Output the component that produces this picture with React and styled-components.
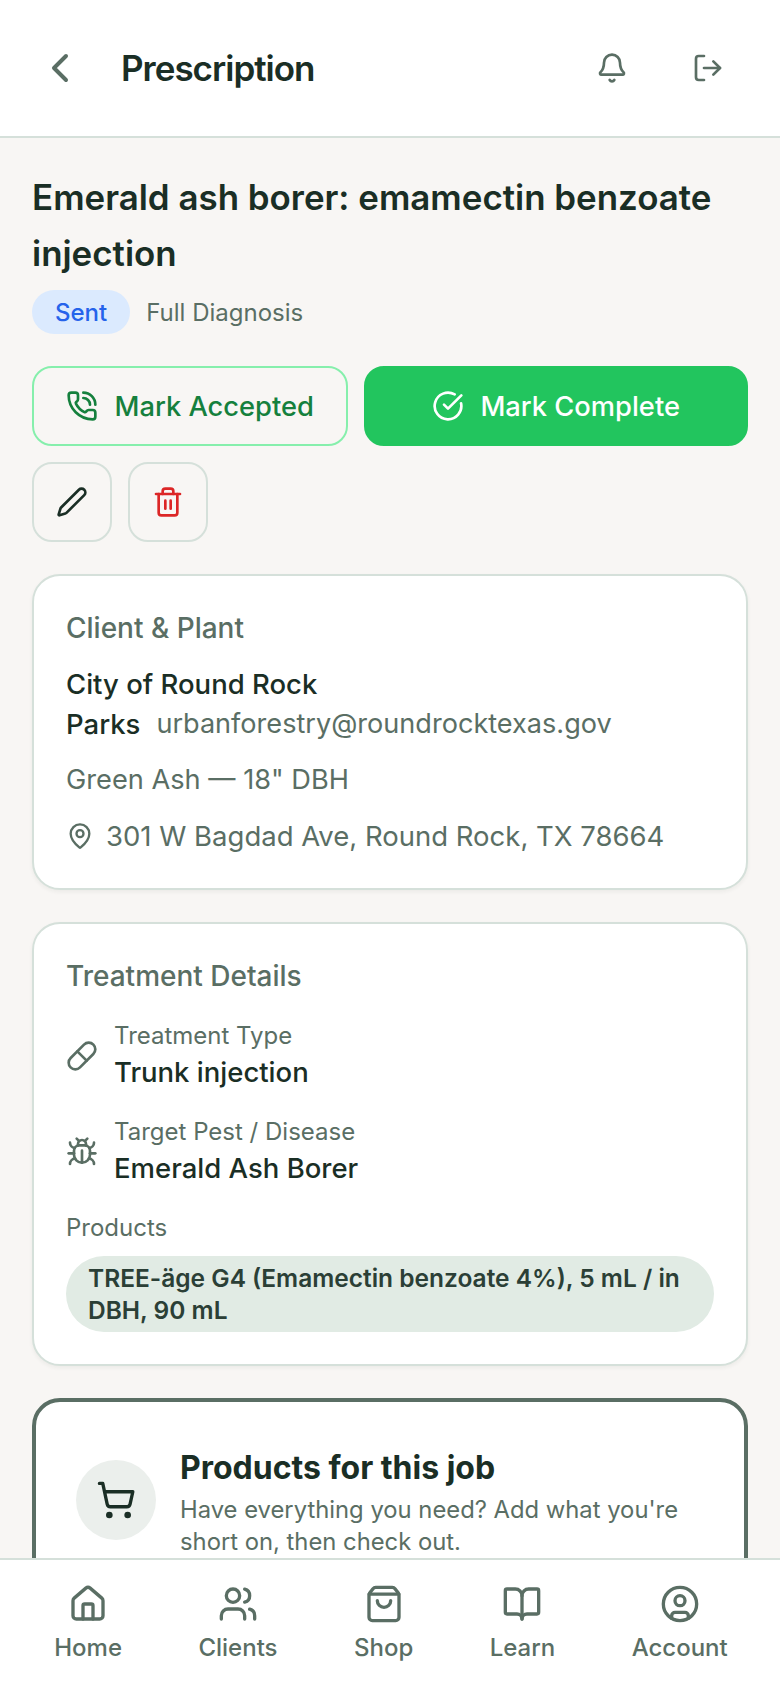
import React from 'react';
import styled, { createGlobalStyle } from 'styled-components';
import {
  ChevronLeft, Bell, LogOut, PhoneCall, CircleCheckBig, Pen, Trash2, MapPin,
  Pill, Bug, ShoppingCart, Home, Users, ShoppingBag, BookOpen, CircleUser,
} from 'lucide-react';

const ink = '#1a2e25';
const muted = '#5a6e64';
const line = '#d5e0da';

const GlobalStyle = createGlobalStyle`
  html, body { margin: 0; padding: 0; height: 100%; }
  body { font-family: Inter, "Liberation Sans", sans-serif; background: #f8f6f4; color: ${ink}; }
`;

const Screen = styled.div`
  width: 780px;
  height: 1688px;
  display: flex;
  flex-direction: column;
  overflow: hidden;
`;

const Header = styled.header`
  flex: none;
  height: 136px;
  display: flex;
  align-items: center;
  padding: 0 56px 0 36px;
  background: #fff;
  border-bottom: 2px solid ${line};
`;

const HeaderTitle = styled.h1`
  flex: 1;
  margin: 0 0 0 37px;
  font-size: 35px;
  font-weight: 600;
  letter-spacing: -1px;
  color: ${ink};
`;

const HeaderIcons = styled.div`
  display: flex;
  gap: 64px;
  color: ${muted};
`;

const Content = styled.main`
  flex: 1;
  min-height: 0;
  overflow: hidden;
  padding: 31px 32px 0;
  display: flex;
  flex-direction: column;
`;

const Title = styled.h2`
  margin: 0;
  font-size: 34.9px;
  line-height: 56px;
  font-weight: 600;
  color: ${ink};
`;

const MetaRow = styled.div`
  display: flex;
  align-items: center;
  gap: 16px;
  margin-top: 9px;
`;

const Badge = styled.span`
  padding: 0 23px;
  height: 44px;
  display: flex;
  align-items: center;
  border-radius: 22px;
  background: #dbeafe;
  color: #2563eb;
  font-size: 24px;
  font-weight: 500;
`;

const MetaText = styled.span`
  font-size: 24px;
  color: ${muted};
`;

const ActionRow = styled.div`
  display: flex;
  gap: 16px;
  margin-top: 32px;
`;

const ActionButton = styled.button`
  height: 80px;
  flex: ${p => p.$grow} 1 0;
  display: flex;
  align-items: center;
  justify-content: center;
  gap: 16px;
  padding: 0;
  border-radius: 20px;
  font-family: inherit;
  font-size: 27.3px;
  font-weight: 500;
  background: ${p => (p.$primary ? '#22c55e' : 'transparent')};
  color: ${p => (p.$primary ? '#fff' : '#15803d')};
  border: 2px solid ${p => (p.$primary ? '#22c55e' : '#86efac')};
`;

const IconRow = styled.div`
  display: flex;
  gap: 16px;
  margin-top: 16px;
`;

const IconButton = styled.button`
  width: 80px;
  height: 80px;
  display: flex;
  align-items: center;
  justify-content: center;
  padding: 0;
  border-radius: 20px;
  background: transparent;
  border: 2px solid ${line};
  color: ${p => p.$color};
`;

const Card = styled.section`
  flex: none;
  margin-top: 32px;
  padding: 32px;
  background: #fff;
  border: 2px solid ${line};
  border-radius: 28px;
  box-shadow: 0 2px 4px rgba(30, 50, 40, 0.06);
`;

const CardLabel = styled.div`
  font-size: 28px;
  line-height: 40px;
  font-weight: 500;
  color: ${muted};
`;

const ClientLine = styled.div`
  margin-top: 16px;
  font-size: 27.5px;
  line-height: 40px;
  font-weight: 500;
  color: ${ink};
`;

const ClientRow = styled.div`
  display: flex;
  align-items: flex-end;
  gap: 16px;
`;

const Muted = styled.div`
  margin-top: ${p => p.$top || 0}px;
  font-size: ${p => p.$size || 27.5}px;
  line-height: 40px;
  color: ${muted};
  white-space: nowrap;
`;

const AddressRow = styled.div`
  display: flex;
  align-items: center;
  gap: 12px;
  margin-top: 16px;
  color: ${muted};
`;

const DetailRow = styled.div`
  display: flex;
  align-items: center;
  gap: 16px;
  margin-top: ${p => p.$top}px;
  color: ${muted};
`;

const DetailLabel = styled.div`
  font-size: 24px;
  line-height: 32px;
  color: ${muted};
`;

const ProductsLabel = styled(DetailLabel)`
  margin-top: 24px;
`;

const DetailValue = styled.div`
  font-size: 27.5px;
  line-height: 40px;
  font-weight: 500;
  color: ${ink};
`;

const ProductPill = styled.div`
  margin-top: 12px;
  padding: 6px 22px;
  border-radius: 38px;
  background: #e1ebe4;
  font-size: 24.5px;
  line-height: 32px;
  font-weight: 600;
  color: #2b3f36;
`;

const ShopCard = styled.section`
  flex: none;
  margin-top: 32px;
  display: flex;
  gap: 24px;
  align-items: flex-start;
  padding: 44px 40px 40px;
  background: #fff;
  border: 4px solid ${muted};
  border-radius: 28px;
`;

const CartCircle = styled.div`
  flex: none;
  width: 80px;
  height: 80px;
  margin-top: 14px;
  border-radius: 50%;
  display: flex;
  align-items: center;
  justify-content: center;
  background: #ebefec;
  color: ${ink};
`;

const ShopTitle = styled.div`
  font-size: 32px;
  line-height: 44px;
  font-weight: 700;
  color: ${ink};
`;

const ShopText = styled.div`
  margin-top: 4px;
  font-size: 23.8px;
  line-height: 32px;
  color: ${muted};
`;

const Nav = styled.nav`
  flex: none;
  height: 130px;
  display: flex;
  justify-content: space-around;
  padding: 24px 14px 0 16px;
  box-sizing: border-box;
  background: #fff;
  border-top: 2px solid ${line};
`;

const NavItem = styled.div`
  display: flex;
  flex-direction: column;
  align-items: center;
  gap: 9px;
  font-size: 24px;
  font-weight: 500;
  color: ${muted};
`;

const navItems = [
  { label: 'Home', Icon: Home },
  { label: 'Clients', Icon: Users },
  { label: 'Shop', Icon: ShoppingBag },
  { label: 'Learn', Icon: BookOpen },
  { label: 'Account', Icon: CircleUser },
];

export default function App() {
  return (
    <Screen>
      <GlobalStyle />
      <Header>
        <ChevronLeft size={48} color={muted} />
        <HeaderTitle>Prescription</HeaderTitle>
        <HeaderIcons>
          <Bell size={32} />
          <LogOut size={32} />
        </HeaderIcons>
      </Header>
      <Content>
        <Title>Emerald ash borer: emamectin benzoate injection</Title>
        <MetaRow>
          <Badge>Sent</Badge>
          <MetaText>Full Diagnosis</MetaText>
        </MetaRow>
        <ActionRow>
          <ActionButton $grow="316"><PhoneCall size={32} />Mark Accepted</ActionButton>
          <ActionButton $grow="384" $primary><CircleCheckBig size={32} />Mark Complete</ActionButton>
        </ActionRow>
        <IconRow>
          <IconButton $color={ink}><Pen size={32} /></IconButton>
          <IconButton $color="#dc2626"><Trash2 size={32} /></IconButton>
        </IconRow>
        <Card>
          <CardLabel>Client &amp; Plant</CardLabel>
          <ClientLine>City of Round Rock</ClientLine>
          <ClientRow>
            <DetailValue>Parks</DetailValue>
            <Muted $size={27.1}>urbanforestry@roundrocktexas.gov</Muted>
          </ClientRow>
          <Muted $top={16} $size={27.2}>Green Ash — 18" DBH</Muted>
          <AddressRow>
            <MapPin size={28} />
            <Muted>301 W Bagdad Ave, Round Rock, TX 78664</Muted>
          </AddressRow>
        </Card>
        <Card>
          <CardLabel>Treatment Details</CardLabel>
          <DetailRow $top={24}>
            <Pill size={32} />
            <div>
              <DetailLabel>Treatment Type</DetailLabel>
              <DetailValue>Trunk injection</DetailValue>
            </div>
          </DetailRow>
          <DetailRow $top={24}>
            <Bug size={32} />
            <div>
              <DetailLabel>Target Pest / Disease</DetailLabel>
              <DetailValue>Emerald Ash Borer</DetailValue>
            </div>
          </DetailRow>
          <ProductsLabel>Products</ProductsLabel>
          <ProductPill>TREE-äge G4 (Emamectin benzoate 4%), 5 mL / in DBH, 90 mL</ProductPill>
        </Card>
        <ShopCard>
          <CartCircle><ShoppingCart size={40} /></CartCircle>
          <div>
            <ShopTitle>Products for this job</ShopTitle>
            <ShopText>Have everything you need? Add what you're short on, then check out.</ShopText>
          </div>
        </ShopCard>
      </Content>
      <Nav>
        {navItems.map(({ label, Icon }) => (
          <NavItem key={label}>
            <Icon size={40} />
            {label}
          </NavItem>
        ))}
      </Nav>
    </Screen>
  );
}
